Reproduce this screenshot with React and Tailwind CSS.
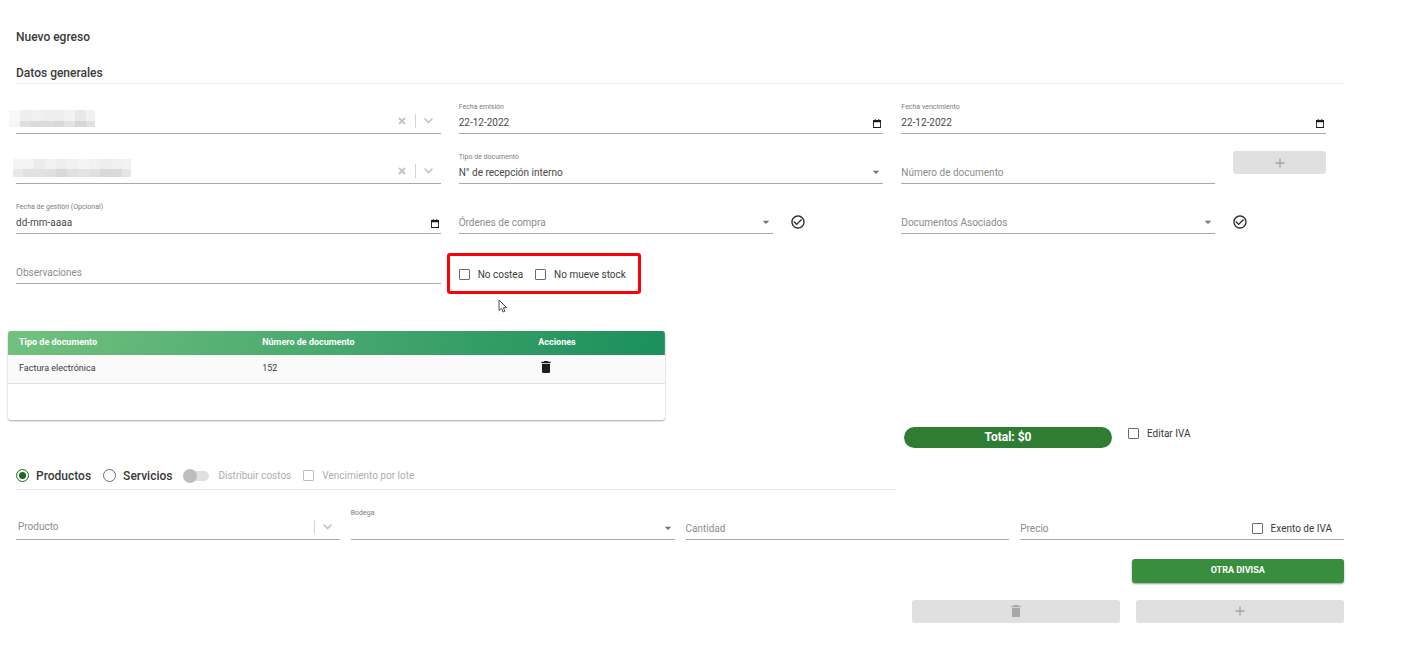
import { useState } from 'react'
import { MdAdd, MdArrowDropDown, MdCheckCircleOutline, MdDelete } from 'react-icons/md'

const inputStyle = "min-w-0 flex-1 bg-transparent text-[10px] leading-5 text-[#484848] outline-none"

function Field(props) {
    return (
        <div className={`flex h-[50px] min-w-0 flex-col justify-end ${props.className || ""}`}>
            {props.label && <label htmlFor={props.id} className="mb-px text-[7px] leading-[10px] text-[#7c7c7c]">{props.label}</label>}
            <div className="relative flex h-[21px] items-center border-b border-[#a8a8a8]">
                {props.children}
            </div>
        </div>
    )
}

function DateField(props) {
    return (
        <Field id={props.id} label={props.label}>
            <input id={props.id} type="text" defaultValue={props.value} placeholder="dd-mm-aaaa" className={`${inputStyle} placeholder:text-[#484848]`}/>
            <button type="button" aria-label="Abrir calendario" className="px-[2px] text-[#1c1c1c]">
                <svg width="8" height="9" viewBox="0 0 9 10" fill="currentColor" aria-hidden="true">
                    <path d="M2 0h1v1h3V0h1v1h2v9H0V1h2zM1 3.500v5.500h7V3.500z" fillRule="evenodd"/>
                </svg>
            </button>
        </Field>
    )
}

function TextField(props) {
    return (
        <Field id={props.id} className={props.className}>
            <input id={props.id} type="text" aria-label={props.placeholder} placeholder={props.placeholder} className={`${inputStyle} placeholder:text-[#8c8c8c]`}/>
            {props.children}
        </Field>
    )
}

function SelectField(props) {
    return (
        <Field id={props.id} label={props.label} className={props.className}>
            <select id={props.id} aria-label={props.label || props.placeholder} className={`mb-px h-5 w-full appearance-none bg-transparent text-[10px] outline-none ${props.placeholder ? "text-[#8c8c8c]" : "text-[#484848]"}`}>
                <option>{props.placeholder || props.value}</option>
            </select>
            <MdArrowDropDown size={16} className="pointer-events-none absolute -right-px bottom-[3px] text-[#757575]"/>
        </Field>
    )
}

function SearchField(props) {
    return (
        <Field id={props.id}>
            <input id={props.id} role="combobox" aria-expanded="false" aria-controls={props.id} aria-label={props.name} type="text" placeholder={props.placeholder} className={`${inputStyle} mb-[3px] pl-[2px] placeholder:text-[#8c8c8c]`}/>
            <div className="mb-1 flex items-center text-[#c4c4c4]">
                {props.clearable &&
                    <button type="button" aria-label="Limpiar" className="pr-[9px]">
                        <svg width="8" height="8" viewBox="0 0 8 8" stroke="currentColor" strokeWidth="1.9"><path d="M1 1l6 6M7 1l-6 6"/></svg>
                    </button>}
                <span className="h-[14px] w-px bg-[#d2d2d2]"/>
                <button type="button" aria-label="Desplegar" className="px-2">
                    <svg width="9" height="6" viewBox="0 0 9 6" fill="none" stroke="currentColor" strokeWidth="1.6" strokeLinecap="round"><path d="M1 1l3.500 3.500L8 1"/></svg>
                </button>
            </div>
            {props.children}
        </Field>
    )
}

// Value hidden behind a mosaic of grey blocks
function Mosaic(props) {
    return (
        <svg className={`absolute bottom-[6px] ${props.className}`} width={props.width} height={props.height} shapeRendering="crispEdges" aria-hidden="true">
            {props.rows.map((row, r) => row.map((fill, c) =>
                <rect
                    key={`${r}-${c}`}
                    x={c * 11 - (c ? props.shift : 0)}
                    y={r ? props.split : 0}
                    width={11}
                    height={r ? props.height - props.split : props.split}
                    fill={fill}
                />
            ))}
        </svg>
    )
}

function Checkbox(props) {
    return (
        <label className={`flex items-center gap-2 text-[10px] leading-4 ${props.disabled ? "text-[#adadad]" : "text-[#3a3a3a]"}`}>
            <input type="checkbox" disabled={props.disabled} className="size-[11px] appearance-none rounded-[1px] border border-[#6b6b6b] checked:bg-[#2e7d32] disabled:border-[#bdbdbd]"/>
            {props.label}
        </label>
    )
}

function Radio(props) {
    return (
        <label className="flex items-center gap-[7px] text-[12px] font-medium leading-5 text-[#3a3a3a]">
            <input
                type="radio"
                name="tipo"
                checked={props.checked}
                onChange={props.onChange}
                className="size-[13px] appearance-none rounded-full border border-[#6b6b6b] checked:border-[#1b6b20] checked:bg-[#1b6b20] checked:bg-clip-content checked:p-[2px]"
            />
            {props.label}
        </label>
    )
}

function GreyButton(props) {
    return (
        <button type="button" disabled aria-label={props.label} className={`flex h-[23px] items-center justify-center rounded-[3px] bg-[#e0e0e0] text-[#a6a6a6] ${props.className || ""}`}>
            {props.children}
        </button>
    )
}

const mosaicA = [
    ["#f8f8f8", "#eeeeee", "#f0f0f0", "#eeeeee", "#ededed", "#f2f2f2", "#e8e8e8", "#f1f1f1"],
    ["#f5f5f5", "#dfdfdf", "#dadada", "#dcdcdc", "#d8d8d8", "#e2e2e2", "#d6d6d6", "#e0e0e0"],
]

const mosaicB = [
    ["#f4f4f4", "#f3f3f3", "#ececec", "#f2f2f2", "#eeeeee", "#f1f1f1", "#f4f4f4", "#f1f1f1", "#eeeeee", "#f0f0f0", "#f2f2f2"],
    ["#e8e8e8", "#e1e1e1", "#e2e2e2", "#e0e0e0", "#d9d9d9", "#e1e1e1", "#e4e4e4", "#e0e0e0", "#d9d9d9", "#dadada", "#e5e5e5"],
]

function GeneralData() {
    return (
        <div className="mr-[18px] grid grid-cols-3 gap-x-[18px]">
            <SearchField id="cliente" name="Cliente" clearable>
                <Mosaic rows={mosaicA} width={86} height={17} split={11} shift={0} className="-left-[7px]"/>
            </SearchField>
            <DateField id="emision" label="Fecha emisión" value="22-12-2022"/>
            <DateField id="vencimiento" label="Fecha vencimiento" value="22-12-2022"/>

            <SearchField id="sucursal" name="Sucursal" clearable>
                <Mosaic rows={mosaicB} width={118} height={18} split={10} shift={1} className="-left-[3px]"/>
            </SearchField>
            <SelectField id="tipo-documento" label="Tipo de documento" value="N° de recepción interno"/>
            <div className="grid grid-cols-4 gap-x-[18px]">
                <TextField id="numero" placeholder="Número de documento" className="col-span-3"/>
                <GreyButton label="Agregar documento" className="mt-[17px]"><MdAdd size={16}/></GreyButton>
            </div>

            <DateField id="gestion" label="Fecha de gestión (Opcional)"/>
            <div className="grid grid-cols-4 gap-x-[18px]">
                <SelectField id="ordenes" placeholder="Órdenes de compra" className="col-span-3"/>
                <button type="button" aria-label="Confirmar orden" className="-ml-px mb-1 self-end justify-self-start text-[#2b2b2b]"><MdCheckCircleOutline size={16}/></button>
            </div>
            <div className="grid grid-cols-4 gap-x-[18px]">
                <SelectField id="asociados" placeholder="Documentos Asociados" className="col-span-3"/>
                <button type="button" aria-label="Confirmar documento" className="-ml-px mb-1 self-end justify-self-start text-[#2b2b2b]"><MdCheckCircleOutline size={16}/></button>
            </div>

            <TextField id="observaciones" placeholder="Observaciones"/>
            <div className="relative -ml-3 mt-[19px] flex h-[41px] items-center gap-3 self-start justify-self-start rounded-[3px] border-3 border-[#fb0007] pl-[9px] pr-3 pt-[2px]">
                <Checkbox label="No costea"/>
                <Checkbox label="No mueve stock"/>
                <svg className="absolute left-12 top-[43px]" width="10" height="14" viewBox="0 0 10 14" fill="#fff" stroke="#4a4a55" strokeWidth="1" aria-hidden="true">
                    <path d="M1 1v10.500l2.500-2.200 1.600 3.700 1.800-.8-1.600-3.500h3.400z"/>
                </svg>
            </div>
        </div>
    )
}

function DocumentsTable() {
    return (
        <div className="-ml-2 mt-[37px] w-[49.5%] overflow-hidden rounded-[3px] pb-9 shadow-[0_1px_2px_rgba(0,0,0,0.35)]">
            <table className="w-full table-fixed text-left text-[9px]">
                <thead className="bg-linear-[105deg,#73c17f,#1b8f5c] text-white">
                    <tr className="h-6">
                        <th className="w-[37%] pl-[11px] font-bold">Tipo de documento</th>
                        <th className="w-[42%] pl-[11px] font-bold">Número de documento</th>
                        <th className="w-[21%] pl-[11px] font-bold">Acciones</th>
                    </tr>
                </thead>
                <tbody className="text-[#3a3a3a]">
                    <tr className="h-7 border-b border-[#e2e2e2] bg-[#fafafa]">
                        <td className="pl-[11px]">Factura electrónica</td>
                        <td className="pl-[11px]">152</td>
                        <td className="pb-1 pl-[11px]">
                            <button type="button" aria-label="Eliminar" className="block text-[#1c1c1c]"><MdDelete size={16}/></button>
                        </td>
                    </tr>
                </tbody>
            </table>
        </div>
    )
}

function App() {
    const [tipo, setTipo] = useState("productos")

    return (
        <main className="min-h-screen bg-white pb-5 pl-4 pr-[68px] pt-[27px] font-['Roboto',sans-serif]">
            <h1 className="text-[12px] font-medium leading-5 text-[#3a3a3a]">Nuevo egreso</h1>
            <h2 className="mt-4 border-b border-[#ececec] text-[12px] font-medium leading-5 text-[#3a3a3a]">Datos generales</h2>

            <GeneralData/>
            <DocumentsTable/>

            <div className="-ml-2 mr-2 mt-[7px] grid grid-cols-6 gap-4">
                <div className="col-start-5 rounded-full bg-[#2e7d32] text-center text-[12px] font-bold leading-[21px] text-white">Total: $0</div>
                <div className="-mt-px"><Checkbox label="Editar IVA"/></div>
            </div>

            <div className="mt-[14px] grid grid-cols-6 gap-4">
                <div className="col-span-4 flex h-7 items-center gap-3 border-b border-[#e6e6e6] pt-px">
                    <Radio label="Productos" checked={tipo === "productos"} onChange={() => setTipo("productos")}/>
                    <Radio label="Servicios" checked={tipo === "servicios"} onChange={() => setTipo("servicios")}/>
                    <label className="-ml-px flex items-center gap-[9px] text-[10px] leading-4 text-[#adadad]">
                        <span className="relative flex items-center">
                            <input type="checkbox" role="switch" disabled className="ml-[6px] h-[10px] w-5 appearance-none rounded-full bg-[#e0e0e0]"/>
                            <span className="absolute left-0 size-[14px] rounded-full bg-[#bdbdbd]"/>
                        </span>
                        Distribuir costos
                    </label>
                    <Checkbox label="Vencimiento por lote" disabled/>
                </div>
            </div>

            <div className="grid grid-cols-4 gap-x-[11px]">
                <SearchField id="producto" name="Producto" placeholder="Producto"/>
                <SelectField id="bodega" label="Bodega"/>
                <TextField id="cantidad" placeholder="Cantidad"/>
                <TextField id="precio" placeholder="Precio">
                    <div className="mr-3"><Checkbox label="Exento de IVA"/></div>
                </TextField>
            </div>

            <div className="mt-[19px] flex justify-end">
                <button type="button" className="h-6 w-[16%] rounded-[3px] bg-[#388e3c] text-[9px] font-bold text-white shadow-[0_1px_2px_rgba(0,0,0,0.4)]">OTRA DIVISA</button>
            </div>
            <div className="mt-[17px] grid grid-cols-6 gap-4">
                <GreyButton label="Eliminar producto" className="col-start-5"><MdDelete size={16}/></GreyButton>
                <GreyButton label="Agregar producto"><MdAdd size={16}/></GreyButton>
            </div>
        </main>
    )
}

export default App
